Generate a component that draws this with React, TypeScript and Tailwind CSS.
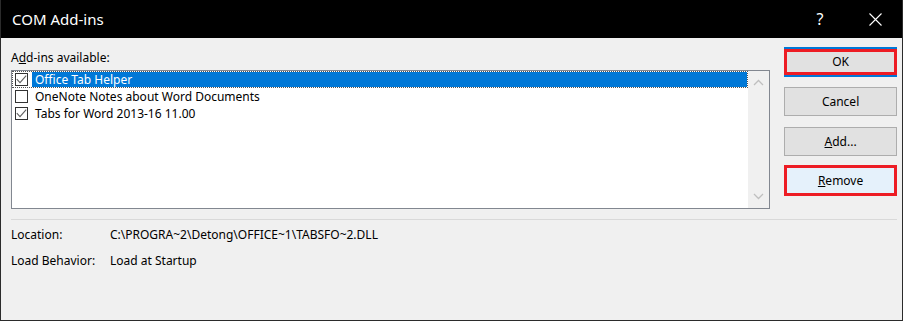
import React from 'react';

const font = { fontFamily: '"Noto Sans", "Open Sans", sans-serif' };

const Check = () => (
  <svg width="11" height="11" viewBox="0 0 11 11" className="block">
    <path d="M0.8 5.2 L4 8.6 L10.2 1.6" fill="none" stroke="#606060" strokeWidth="1.1" />
  </svg>
);

const Checkbox = ({ checked }: { checked: boolean }) => (
  <div className="w-[13px] h-[13px] border border-[#333] bg-white flex items-center justify-center">
    {checked && <Check />}
  </div>
);

const Chevron = ({ up }: { up?: boolean }) => (
  <svg width="11" height="7" viewBox="0 0 11 7" className="block">
    <path
      d={up ? 'M1 6 L5.5 1.5 L10 6' : 'M1 1 L5.5 5.5 L10 1'}
      fill="none"
      stroke="#bfbfbf"
      strokeWidth="1.3"
    />
  </svg>
);

const items = [
  { name: 'Office Tab Helper', checked: true, selected: true },
  { name: 'OneNote Notes about Word Documents', checked: false, selected: false },
  { name: 'Tabs for Word 2013-16 11.00', checked: true, selected: false },
];

const Btn = ({ children, className = '' }: { children: React.ReactNode; className?: string }) => (
  <div
    className={`h-[29px] flex items-center justify-center text-[12px] text-black border ${className}`}
  >
    {children}
  </div>
);

export default function App() {
  return (
    <div className="w-[903px] h-[321px] bg-[#f0f0f0] border-x border-b border-[#2b2b2b] flex flex-col" style={font}>
      {/* Title bar */}
      <div className="h-[38px] bg-black flex items-center text-white shrink-0">
        <div className="pl-[11px] text-[15px] flex-1">COM Add-ins</div>
        <div className="w-[30px] text-[16px] text-center mr-[34px]">?</div>
        <svg width="13" height="13" viewBox="0 0 13 13" className="mr-[20px]">
          <path d="M0.5 0.5 L12.5 12.5 M12.5 0.5 L0.5 12.5" stroke="white" strokeWidth="1.1" />
        </svg>
      </div>

      <div className="flex pl-[10px] pr-[5px]">
        {/* Left: list */}
        <div className="w-[760px] flex flex-col">
          <div className="mt-[12px] h-[16px] leading-[16px] text-[12px] text-black">
            A<span className="underline">d</span>d-ins available:
          </div>
          <div className="mt-[4px] h-[139px] border border-[#828790] bg-white flex">
            <div className="flex-1 flex flex-col">
              {items.map((it) => (
                <div
                  key={it.name}
                  className={`h-[17px] flex items-center border ${
                    it.selected ? 'border-dotted border-[#555]' : 'border-transparent'
                  }`}
                >
                  <div className="pl-[2px] w-[19px]">
                    <Checkbox checked={it.checked} />
                  </div>
                  <div
                    className={`h-full flex-1 flex items-center pl-[3px] text-[12px] ${
                      it.selected ? 'bg-[#0078d7] text-white' : 'text-black'
                    }`}
                  >
                    {it.name}
                  </div>
                </div>
              ))}
            </div>
            <div className="w-[21px] bg-[#f0f0f0] flex flex-col items-center justify-between py-[8px]">
              <Chevron up />
              <Chevron />
            </div>
          </div>
        </div>

        {/* Right: buttons */}
        <div className="ml-[14px] w-[113px] mt-[9px] flex flex-col gap-[11px]">
          <div className="h-[30px] border-y-2 border-[#0078d7] flex">
            <div className="flex-1 border-[3px] border-[#ed1c24] bg-[#e1e1e1] flex items-center justify-center text-[12px]">
              OK
            </div>
          </div>
          <Btn className="border-[#adadad] bg-[#e1e1e1] -mt-[1px]">Cancel</Btn>
          <Btn className="border-[#adadad] bg-[#e1e1e1]">
            <span className="underline">A</span>dd...
          </Btn>
          <Btn className="h-[31px] -mt-[2px] border-[3px] border-[#ed1c24] bg-[#e5f1fb]">
            <span className="underline">R</span>emove
          </Btn>
        </div>
      </div>

      <div className="ml-[10px] mr-[5px] mt-[10px] h-px bg-[#d9d9d9]" />

      <div className="pl-[10px] mt-[7px] flex flex-col gap-[10px] text-[12px] text-black">
        <div className="flex h-[16px] items-center">
          <div className="w-[99px]">Location:</div>
          <div>C:\PROGRA~2\Detong\OFFICE~1\TABSFO~2.DLL</div>
        </div>
        <div className="flex h-[16px] items-center">
          <div className="w-[99px]">Load Behavior:</div>
          <div>Load at Startup</div>
        </div>
      </div>
    </div>
  );
}
